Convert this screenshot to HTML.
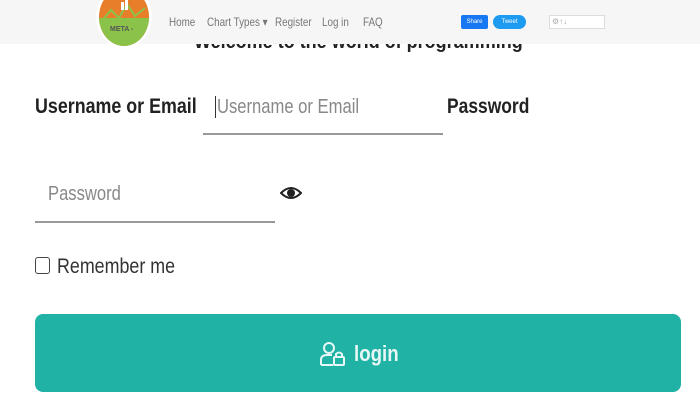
<!DOCTYPE html>
<html><head><style>
*{margin:0;padding:0;box-sizing:border-box}
body{width:700px;height:400px;overflow:hidden;background:#fff;font-family:"Liberation Sans",sans-serif;position:relative}
.nav{position:absolute;left:0;top:0;width:700px;height:44px;background:#f6f6f6;z-index:2}
.t{position:absolute;white-space:nowrap;transform-origin:left center}
.nl{font-size:12px;color:#777;top:15px;transform:scaleX(.82)}
</style></head><body>
<div class="t" style="left:194px;top:31px;font-size:20px;font-weight:bold;color:#222;transform:scaleX(.9)">Welcome to the world of programming</div>
<div class="nav">
 <div style="position:absolute;left:96px;top:-14px;width:56px;height:62px;border-radius:50%;background:#fff;"></div>
 <div style="position:absolute;left:99px;top:-12px;width:50px;height:58px;border-radius:50%;overflow:hidden;background:#e87d2a">
  <div style="position:absolute;left:0;top:30px;width:50px;height:30px;background:#8bc34a"></div>
  <svg style="position:absolute;left:0;top:0" width="50" height="58"><polyline points="2,34 12,22 20,30 28,16 36,28 46,20" fill="none" stroke="#8bc34a" stroke-width="2"/><rect x="22" y="14" width="3" height="8" fill="#fff"/><rect x="26" y="10" width="3" height="12" fill="#fff"/></svg>
  <div style="position:absolute;left:11px;top:38px;font-size:7px;font-weight:bold;color:#555">META -</div>
 </div>
 <div class="t nl" style="left:169px">Home</div>
 <div class="t nl" style="left:207px">Chart Types ▾</div>
 <div class="t nl" style="left:275px">Register</div>
 <div class="t nl" style="left:322px">Log in</div>
 <div class="t nl" style="left:363px">FAQ</div>
 <div style="position:absolute;left:461px;top:15px;width:27px;height:14px;background:#1877f2;border-radius:2px;color:#fff;font-size:6px;line-height:14px;text-align:center">Share</div>
 <div style="position:absolute;left:493px;top:15px;width:33px;height:14px;background:#1d9bf0;border-radius:7px;color:#fff;font-size:6px;line-height:14px;text-align:center">Tweet</div>
 <div style="position:absolute;left:549px;top:15px;width:56px;height:14px;background:#fff;border:1px solid #ddd;font-size:8px;color:#aaa;line-height:12px;padding-left:2px">⚙↑↓</div>
</div>
<div class="t" style="left:35px;top:95px;font-size:21px;font-weight:bold;color:#222;transform:scaleX(.85)">Username or Email</div>
<div style="position:absolute;left:215px;top:96px;width:1px;height:22px;background:#333"></div>
<div class="t" style="left:217px;top:96px;font-size:20px;color:#888;transform:scaleX(.83)">Username or Email</div>
<div style="position:absolute;left:203px;top:133px;width:240px;height:2px;background:#999"></div>
<div class="t" style="left:447px;top:95px;font-size:21px;font-weight:bold;color:#222;transform:scaleX(.83)">Password</div>
<div class="t" style="left:48px;top:183px;font-size:20px;color:#888;transform:scaleX(.83)">Password</div>
<div style="position:absolute;left:35px;top:221px;width:240px;height:2px;background:#999"></div>
<svg style="position:absolute;left:280px;top:184px" width="22" height="18" viewBox="0 0 22 18"><path d="M1 9 Q11 -1 21 9 Q11 19 1 9Z" fill="none" stroke="#222" stroke-width="2"/><circle cx="11" cy="9" r="4" fill="#222"/></svg>
<div style="position:absolute;left:35px;top:257px;width:15px;height:17px;border:1.5px solid #444;border-radius:3px"></div>
<div class="t" style="left:57px;top:255px;font-size:21px;color:#333;transform:scaleX(.85)">Remember me</div>
<div style="position:absolute;left:35px;top:314px;width:646px;height:78px;background:#20b2a5;border-radius:8px"></div>
<svg style="position:absolute;left:319px;top:341px" width="28" height="26" viewBox="0 0 28 26" fill="none" stroke="#e6f7f5" stroke-width="2"><circle cx="10" cy="7" r="5"/><path d="M2 24 V19 Q2 14 8 14 H13"/><path d="M2 24 H14"/><rect x="15" y="16" width="10" height="8" rx="1"/><path d="M17 16 V13 Q20 10 23 13 V16"/></svg>
<div class="t" style="left:354px;top:341px;font-size:22px;font-weight:bold;color:#e6f7f5;transform:scaleX(.85)">login</div>
</body></html>
